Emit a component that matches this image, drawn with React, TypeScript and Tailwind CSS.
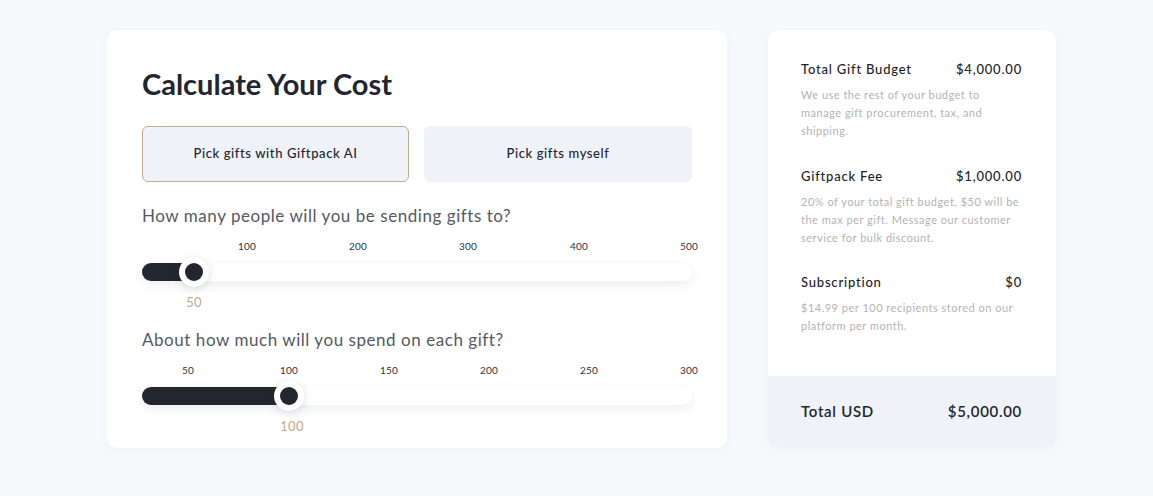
const ticksPeople = [
  { label: '100', left: 105 },
  { label: '200', left: 216 },
  { label: '300', left: 326 },
  { label: '400', left: 437 },
  { label: '500', left: 547 },
]

const ticksSpend = [
  { label: '50', left: 46 },
  { label: '100', left: 147 },
  { label: '150', left: 247 },
  { label: '200', left: 347 },
  { label: '250', left: 447 },
  { label: '300', left: 547 },
]

type Tick = { label: string; left: number }

function Slider({ ticks, pos, value, valueLeft }: { ticks: Tick[]; pos: number; value: string; valueLeft: number }) {
  return (
    <div>
      {/* tick labels */}
      <div className="relative mt-[11px] h-[14px] w-[550px]">
        {ticks.map((t) => (
          <span
            key={t.label}
            className="absolute top-0 -translate-x-1/2 text-[10px] leading-[14px] tracking-[0.2px] text-[#2e3238]"
            style={{ left: t.left }}
          >
            {t.label}
          </span>
        ))}
      </div>

      {/* track */}
      <div className="relative mt-[10px] h-[18px] w-[550px] rounded-full bg-white shadow-[0_4px_12px_rgba(30,40,60,0.08)]">
        <div className="h-full rounded-full bg-[#22262e]" style={{ width: pos }} />
        <div
          className="absolute top-1/2 flex h-[30px] w-[30px] -translate-x-1/2 -translate-y-1/2 items-center justify-center rounded-full bg-white shadow-[0_2px_8px_rgba(30,40,60,0.15)]"
          style={{ left: pos }}
        >
          <div className="h-[18px] w-[18px] rounded-full bg-[#22262e]" />
        </div>
      </div>

      {/* current value */}
      <div className="relative mt-[12px] h-[18px] w-[550px]">
        <span
          className="absolute top-0 -translate-x-1/2 text-[13px] leading-[18px] tracking-[0.3px] text-[#c2a98b]"
          style={{ left: valueLeft }}
        >
          {value}
        </span>
      </div>
    </div>
  )
}

function SummaryRow({ title, amount, desc, className }: { title: string; amount: string; desc: string; className?: string }) {
  return (
    <div className={className}>
      <div className="flex items-center justify-between text-[13px] font-medium leading-[20px] tracking-[0.8px] text-[#1e2228]">
        <span>{title}</span>
        <span>{amount}</span>
      </div>
      <p className="mt-[7px] text-[11px] leading-[18px] tracking-[0.5px] text-[#b3b3b3]">{desc}</p>
    </div>
  )
}

export default function App() {
  return (
    <div
      className="h-[496px] w-full bg-[#f7f8fc]"
      style={{ fontFamily: 'Lato, "Open Sans", sans-serif' }}
    >
      <div className="flex items-start gap-[41px] pl-[107px] pt-[30px]">
        {/* calculator */}
        <div className="w-[620px] rounded-[10px] bg-white px-[35px] pb-[13px] pt-[37px] shadow-[0_2px_10px_rgba(30,40,80,0.03)]">
          <h1 className="text-[29px] font-bold leading-[34px] text-[#22262e]">Calculate Your Cost</h1>

          <div className="mt-[25px] flex gap-[15px]">
            <button className="h-[56px] w-[268px] rounded-[6px] border border-[#c4ad8f] bg-[#eff2f8] text-[13px] font-medium tracking-[0.6px] text-[#22262e]">
              Pick gifts with Giftpack AI
            </button>
            <button className="h-[56px] w-[269px] rounded-[6px] bg-[#eff2f8] text-[13px] font-medium tracking-[0.6px] text-[#22262e]">
              Pick gifts myself
            </button>
          </div>

          <p className="mt-[22px] text-[17px] leading-[24px] tracking-[0.55px] text-[#55595f]">
            How many people will you be sending gifts to?
          </p>
          <Slider ticks={ticksPeople} pos={52} value="50" valueLeft={52} />

          <p className="mt-[17px] text-[17px] leading-[24px] tracking-[0.55px] text-[#55595f]">
            About how much will you spend on each gift?
          </p>
          <Slider ticks={ticksSpend} pos={147} value="100" valueLeft={150} />
        </div>

        {/* summary */}
        <div className="w-[288px] overflow-hidden rounded-[10px] bg-white shadow-[0_2px_10px_rgba(30,40,80,0.03)]">
          <div className="pb-[41px] pl-[33px] pr-[34px] pt-[29px]">
            <SummaryRow
              title="Total Gift Budget"
              amount="$4,000.00"
              desc="We use the rest of your budget to manage gift procurement, tax, and shipping."
            />
            <SummaryRow
              className="mt-[26px]"
              title="Giftpack Fee"
              amount="$1,000.00"
              desc="20% of your total gift budget, $50 will be the max per gift. Message our customer service for bulk discount."
            />
            <SummaryRow
              className="mt-[25px]"
              title="Subscription"
              amount="$0"
              desc="$14.99 per 100 recipients stored on our platform per month."
            />
          </div>
          <div className="flex h-[71px] items-center justify-between bg-[#eff2f8] pl-[33px] pr-[34px] text-[15px] font-semibold tracking-[0.7px] text-[#22262e]">
            <span>Total USD</span>
            <span>$5,000.00</span>
          </div>
        </div>
      </div>
    </div>
  )
}
